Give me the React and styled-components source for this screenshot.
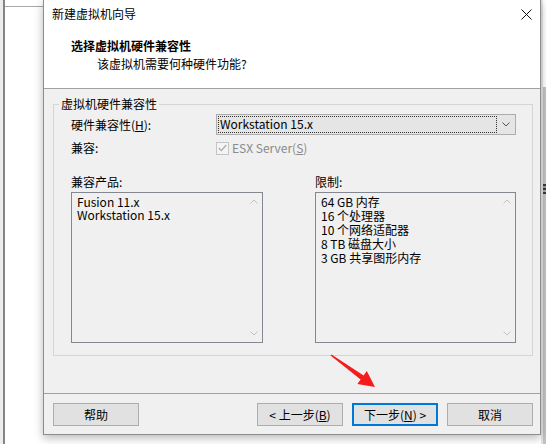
import React from 'react'
import styled, { createGlobalStyle } from 'styled-components'

const GlobalStyle = createGlobalStyle`
  * { box-sizing: border-box; }
  html, body { margin: 0; padding: 0; background: #fff; }
  body {
    width: 546px;
    height: 444px;
    overflow: hidden;
    font-family: 'Noto Sans CJK SC', 'Noto Sans', sans-serif;
    font-size: 12px;
    color: #000;
  }
`

const Page = styled.div`
  position: relative;
  display: flex;
  height: 444px;
`

const Backdrop = styled.div`
  width: 43px;
  flex-shrink: 0;
  box-shadow: inset 3px 0 #ececec, inset 5px 0 #858585;
`

const BackdropRule = styled.div`
  margin: 6px 0 0 5px;
  height: 1px;
  background: #a8a8a8;
`

const BackdropEdge = styled.div`
  width: 5px;
  flex-shrink: 0;
  padding: 184px 0 0 2px;
  background: linear-gradient(#fff 87px, #c4c4c4 87px);
  box-shadow: inset 2px 0 #e6e6e6;
`

// sliver of an icon from the window behind
const EdgeIcon = styled.div`
  width: 3px;
  height: 10px;
  background: linear-gradient(#3a3a3a 0 2px, #9a9a9a 2px 4px, #3a3a3a 4px 6px, #a8a8a8 6px 8px, #3a3a3a 8px);
`

const Dialog = styled.div`
  position: relative;
  z-index: 1;
  width: 498px;
  height: 435px;
  flex-shrink: 0;
  display: flex;
  flex-direction: column;
  background: #f0f0f0;
  border: 1px solid #8c8c8c;
  border-top: none;
  box-shadow: 0 3px 9px rgba(0, 0, 0, 0.28);
`

const Header = styled.div`
  height: 89px;
  background: #fff;
  border-bottom: 1px solid #a0a0a0;
`

const TitleBar = styled.div`
  height: 28px;
  display: flex;
  align-items: center;
  justify-content: space-between;
  padding: 0 8px;
  line-height: 14px;
`

const CloseButton = styled.svg`
  width: 11px;
  height: 11px;
`

const Heading = styled.div`
  margin: 11px 0 0 27px;
  line-height: 14px;
  font-weight: 700;
`

const Subheading = styled.div`
  margin: 4px 0 0 53px;
  line-height: 14px;
`

const Body = styled.div`
  flex: 1;
  padding: 8px 7px 0 9px;
`

const GroupBox = styled.fieldset`
  margin: 0;
  min-width: 0;
  padding: 3px 16px 12px 17px;
  border: 1px solid #d5d5d5;
`

const GroupTitle = styled.legend`
  margin-left: -12px;
  padding: 0 2px;
  line-height: 14px;
`

const FieldRow = styled.div`
  display: flex;
  align-items: center;
  height: ${p => p.$h}px;
  margin-top: ${p => p.$gap || 0}px;
`

const FieldLabel = styled.span`
  width: 145px;
  flex-shrink: 0;
  line-height: 14px;
`

const Select = styled.div`
  width: 300px;
  height: 21px;
  display: flex;
  align-items: center;
  padding: 0 0 0 1px;
  border: 1px solid #adadad;
  background: #e5e5e5;
`

const SelectValue = styled.span`
  flex: 1;
  height: 17px;
  line-height: 16px;
  padding-left: 2px;
  outline: 1px dotted #333;
  outline-offset: -1px;
`

const SelectArrow = styled.span`
  width: 18px;
  display: flex;
  justify-content: center;
  align-items: center;
`

const CheckBox = styled.span`
  width: 13px;
  height: 13px;
  margin-right: 3px;
  display: flex;
  align-items: center;
  justify-content: center;
  border: 1px solid #c4c4c4;
  background: #f4f4f4;
`

const DisabledText = styled.span`
  color: #8a8a8a;
  line-height: 14px;
`

const Columns = styled.div`
  display: flex;
  justify-content: space-between;
  margin-top: 20px;
`

const Column = styled.div`
  width: ${p => p.$w}px;
`

const ColumnLabel = styled.div`
  line-height: 14px;
  margin-bottom: 3px;
`

const ListBox = styled.div`
  height: 151px;
  display: flex;
  border: 1px solid #828790;
  background: #f0f0f0;
`

const ListItems = styled.ul`
  flex: 1;
  margin: 0;
  padding: 2px 0 0 5px;
  list-style: none;
  line-height: ${p => p.$row}px;
  white-space: nowrap;
`

const ScrollTrack = styled.div`
  width: 17px;
  display: flex;
  flex-direction: column;
  justify-content: space-between;
`

const ScrollButton = styled.div`
  height: 17px;
  display: flex;
  align-items: center;
  justify-content: center;
`

const Footer = styled.div`
  height: 41px;
  display: flex;
  gap: 9px;
  padding: 9px 7px 0 9px;
  border-top: 1px solid #a0a0a0;
`

const Button = styled.button`
  width: 86px;
  height: 23px;
  margin-right: ${p => (p.$push ? 'auto' : '0')};
  padding: 0;
  font: inherit;
  line-height: 14px;
  color: #000;
  background: #e1e1e1;
  border: 1px solid ${p => (p.$primary ? '#0078d7' : '#adadad')};
  box-shadow: ${p => (p.$primary ? 'inset 0 0 0 1px #0078d7' : 'none')};
`

const Annotation = styled.svg`
  position: absolute;
  left: 0;
  top: 0;
  z-index: 2;
  pointer-events: none;
`

const Chevron = ({ up, color }) => (
  <svg width="8" height="5" viewBox="0 0 8 5">
    <path
      d={up ? 'M0.5 4.5 L4 1 L7.5 4.5' : 'M0.5 0.5 L4 4 L7.5 0.5'}
      fill="none"
      stroke={color}
      strokeWidth="1"
    />
  </svg>
)

const ScrollList = ({ items, row }) => (
  <ListBox>
    <ListItems $row={row}>
      {items.map(item => (
        <li key={item}>{item}</li>
      ))}
    </ListItems>
    <ScrollTrack>
      <ScrollButton>
        <Chevron up color="#c2c2c2" />
      </ScrollButton>
      <ScrollButton>
        <Chevron color="#c2c2c2" />
      </ScrollButton>
    </ScrollTrack>
  </ListBox>
)

const products = ['Fusion 11.x', 'Workstation 15.x']
const limits = [
  '64 GB 内存',
  '16 个处理器',
  '10 个网络适配器',
  '8 TB 磁盘大小',
  '3 GB 共享图形内存',
]

const App = () => (
  <Page>
    <GlobalStyle />
    <Backdrop>
      <BackdropRule />
    </Backdrop>
    <Dialog>
      <Header>
        <TitleBar>
          <span>新建虚拟机向导</span>
          <CloseButton viewBox="0 0 11 11">
            <path d="M0.5 0.5 L10.5 10.5 M10.5 0.5 L0.5 10.5" stroke="#111" strokeWidth="1" />
          </CloseButton>
        </TitleBar>
        <Heading>选择虚拟机硬件兼容性</Heading>
        <Subheading>该虚拟机需要何种硬件功能?</Subheading>
      </Header>
      <Body>
        <GroupBox>
          <GroupTitle>虚拟机硬件兼容性</GroupTitle>
          <FieldRow $h={21}>
            <FieldLabel>
              硬件兼容性(<u>H</u>):
            </FieldLabel>
            <Select>
              <SelectValue>Workstation 15.x</SelectValue>
              <SelectArrow>
                <Chevron color="#555" />
              </SelectArrow>
            </Select>
          </FieldRow>
          <FieldRow $h={14} $gap={6}>
            <FieldLabel>兼容:</FieldLabel>
            <CheckBox>
              <svg width="9" height="8" viewBox="0 0 9 8">
                <path d="M0.8 4 L3.3 6.6 L8.3 1" fill="none" stroke="#a9a9a9" strokeWidth="1.3" />
              </svg>
            </CheckBox>
            <DisabledText>
              ESX Server(<u>S</u>)
            </DisabledText>
          </FieldRow>
          <Columns>
            <Column $w={192}>
              <ColumnLabel>兼容产品:</ColumnLabel>
              <ScrollList items={products} row={13} />
            </Column>
            <Column $w={201}>
              <ColumnLabel>限制:</ColumnLabel>
              <ScrollList items={limits} row={14} />
            </Column>
          </Columns>
        </GroupBox>
      </Body>
      <Footer>
        <Button $push>帮助</Button>
        <Button>
          &lt; 上一步(<u>B</u>)
        </Button>
        <Button $primary>
          下一步(<u>N</u>) &gt;
        </Button>
        <Button>取消</Button>
      </Footer>
    </Dialog>
    <BackdropEdge>
      <EdgeIcon />
    </BackdropEdge>
    <Annotation width="546" height="444" viewBox="0 0 546 444">
      <polygon
        points="331.5,354.4 363.6,375.6 366.8,371.1 375,387 357.4,384.1 360.6,379.6 330.5,355.6"
        fill="#f41c1c"
      />
    </Annotation>
  </Page>
)

export default App
